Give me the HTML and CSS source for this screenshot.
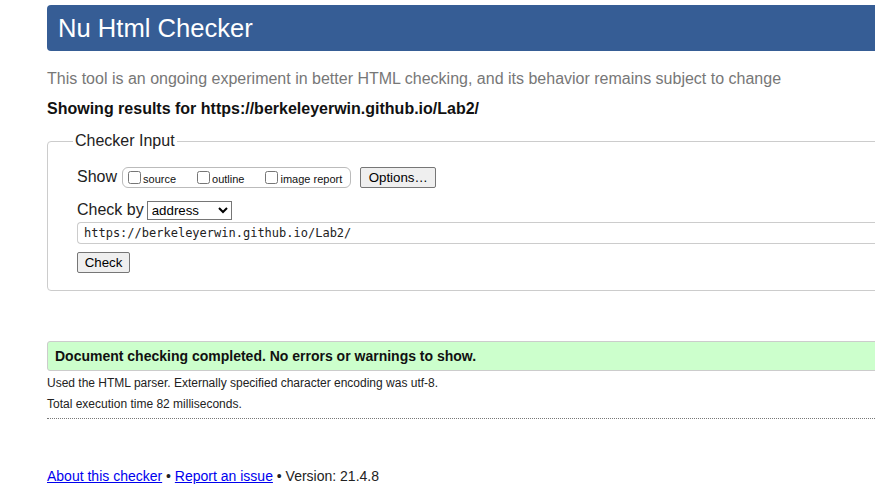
FILE: index.html
```html
<!DOCTYPE html>
<html>
<head>
<meta charset="utf-8">
<title>Nu Html Checker</title>
<link rel="stylesheet" href="styles.css">
</head>
<body>
<div class="page">
  <h1 class="title">Nu Html Checker</h1>
  <p class="tagline">This tool is an ongoing experiment in better HTML checking, and its behavior remains subject to change</p>
  <p class="showing">Showing results for https://berkeleyerwin.github.io/Lab2/</p>
  <fieldset class="input-box">
    <legend class="input-legend">Checker Input</legend>
    <div class="row show-row">
      <span class="row-label">Show</span>
      <span class="opts">
        <label class="opt"><input type="checkbox" class="cb"><span class="opt-text">source</span></label>
        <label class="opt"><input type="checkbox" class="cb"><span class="opt-text">outline</span></label>
        <label class="opt opt-last"><input type="checkbox" class="cb"><span class="opt-text">image report</span></label>
      </span>
      <button class="btn btn-options">Options…</button>
    </div>
    <div class="row check-row">
      <span class="row-label">Check by</span>
      <select class="sel"><option>address</option></select>
    </div>
    <div class="url-field">https://berkeleyerwin.github.io/Lab2/</div>
    <div class="row"><button class="btn btn-check">Check</button></div>
  </fieldset>
  <div class="success">Document checking completed. No errors or warnings to show.</div>
  <p class="details">Used the HTML parser. Externally specified character encoding was utf-8.</p>
  <p class="details">Total execution time 82 milliseconds.</p>
  <div class="rule"></div>
  <p class="footer"><a href="#" class="link">About this checker</a> • <a href="#" class="link">Report an issue</a> • Version: 21.4.8</p>
</div>
</body>
</html>
```
FILE: styles.css
```css
html, body {
  margin: 0;
  padding: 0;
  overflow: hidden;
  background: #fff;
}
body {
  font-family: "Liberation Sans", Arial, sans-serif;
  color: #111;
}
.page {
  width: 900px;
  padding: 5px 0 0 47px;
}
.title {
  margin: 0;
  background: #365d95;
  color: #fff;
  font-weight: normal;
  font-size: 25.6px;
  line-height: 46px;
  height: 46px;
  padding: 0 11px;
  border-radius: 4px;
}
.tagline {
  margin: 18px 0 0;
  color: #777;
  font-size: 16px;
  line-height: 20px;
}
.showing {
  margin: 10px 0 0;
  font-weight: bold;
  font-size: 16px;
  line-height: 20px;
}
.input-box {
  margin: 13px 0 0;
  border: 1px solid #ccc;
  border-radius: 4px;
  padding: 6px 0 17px 29px;
}
.input-legend {
  margin-left: -4px;
  padding: 0 2px;
  font-size: 16px;
  color: #222;
}
.row {
  display: flex;
  align-items: center;
}
.show-row {
  margin-top: 10px;
  height: 22px;
}
.row-label {
  font-size: 16px;
  color: #222;
}
.opts {
  display: inline-flex;
  align-items: center;
  margin-left: 5px;
  height: 19px;
  border: 1px solid #bbb;
  border-radius: 6px;
  padding: 0 8px 0 5px;
  font-size: 11px;
}
.opt {
  display: inline-flex;
  align-items: center;
  margin-right: 21px;
  color: #111;
}
.opt-text {
  position: relative;
  top: 2px;
}
.opt-last {
  margin-right: 0;
}
.cb {
  margin: 0 2px 0 0;
  width: 13px;
  height: 13px;
}
.btn {
  font-family: "Liberation Sans", Arial, sans-serif;
  font-size: 13.3px;
  color: #000;
  background: #efefef;
  border: 1px solid #767676;
  border-radius: 2px;
  padding: 1px 6px;
  height: 21px;
}
.btn-options {
  margin-left: 9px;
  width: 76px;
}
.check-row {
  margin-top: 12px;
  height: 20px;
}
.sel {
  margin-left: 3px;
  width: 85px;
  height: 19px;
  font-family: "Liberation Sans", Arial, sans-serif;
  font-size: 13.3px;
  border: 1px solid #767676;
  border-radius: 0;
  background: #fff;
  color: #000;
}
.url-field {
  margin-top: 2px;
  height: 20px;
  line-height: 20px;
  border: 1px solid #ccc;
  border-right: none;
  border-radius: 4px 0 0 4px;
  padding-left: 6px;
  font-family: "DejaVu Sans Mono", "Liberation Mono", monospace;
  font-size: 12px;
  color: #222;
}
.btn-check {
  margin-top: 8px;
  width: 53px;
}
.success {
  margin-top: 50px;
  height: 28px;
  line-height: 28px;
  background: #ccffcc;
  border: 1px solid #ccc;
  border-radius: 3px;
  padding-left: 7px;
  font-weight: bold;
  font-size: 14px;
  color: #111;
}
.details {
  margin: 4px 0 0;
  font-size: 12px;
  line-height: 17px;
  color: #222;
}
.rule {
  margin-top: 5px;
  border-top: 1px dotted #777;
}
.footer {
  margin: 49px 0 0;
  font-size: 14px;
  color: #222;
}
.link {
  color: #0000ee;
}
```
